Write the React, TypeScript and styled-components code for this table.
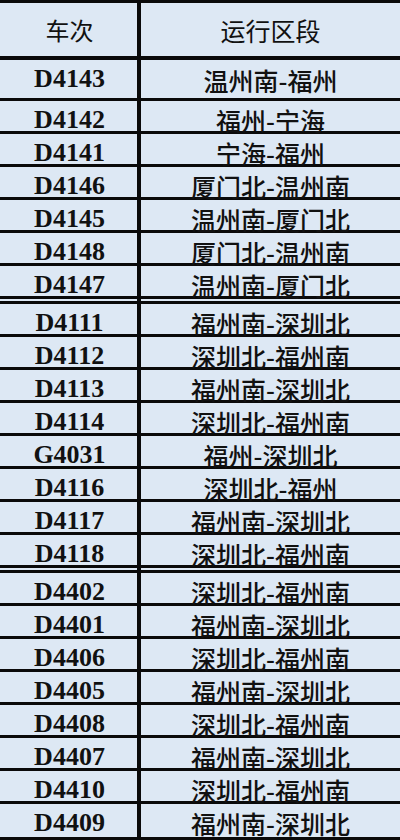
import styled, { createGlobalStyle } from "styled-components";

const GlobalStyle = createGlobalStyle`
  html, body {
    margin: 0;
    padding: 0;
    background: #dde8f4;
  }
`;

const Table = styled.div`
  width: 400px;
  height: 840px;
  box-sizing: border-box;
  border-top: 3px solid #0a0a0a;
  background: #dde8f4;
  overflow: hidden;
`;

const Row = styled.div<{ $tall?: boolean; $double?: boolean; $head?: boolean }>`
  display: grid;
  grid-template-columns: 141px 1fr;
  box-sizing: border-box;
  height: ${(p) => (p.$head ? 57 : p.$tall ? 41 : p.$double ? 38 : 33)}px;
  border-bottom: ${(p) =>
    p.$double ? "8px double #0a0a0a" : p.$head ? "4px solid #0a0a0a" : "3px solid #0a0a0a"};
  &:last-child {
    height: 36px;
  }
`;

const Cell = styled.div`
  display: flex;
  align-items: center;
  justify-content: center;
  color: #111;
  white-space: nowrap;
`;

const CodeCell = styled(Cell)`
  border-right: 4px solid #0a0a0a;
  font-family: "Liberation Serif", "Times New Roman", serif;
  font-weight: bold;
  font-size: 26px;
  padding-left: 2px;
`;

const RouteCell = styled(Cell)`
  font-family: "Noto Sans CJK SC", "Noto Sans", sans-serif;
  font-weight: 500;
  font-size: 25px;
  padding-top: 1px;
`;

const HeadCode = styled(CodeCell)`
  font-family: "Noto Sans CJK SC", sans-serif;
  font-weight: 400;
  font-size: 24px;
`;

const HeadRoute = styled(RouteCell)`
  font-weight: 400;
`;

type Train = { code: string; route: string };

const groups: Train[][] = [
  [
    { code: "D4143", route: "温州南-福州" },
    { code: "D4142", route: "福州-宁海" },
    { code: "D4141", route: "宁海-福州" },
    { code: "D4146", route: "厦门北-温州南" },
    { code: "D4145", route: "温州南-厦门北" },
    { code: "D4148", route: "厦门北-温州南" },
    { code: "D4147", route: "温州南-厦门北" },
  ],
  [
    { code: "D4111", route: "福州南-深圳北" },
    { code: "D4112", route: "深圳北-福州南" },
    { code: "D4113", route: "福州南-深圳北" },
    { code: "D4114", route: "深圳北-福州南" },
    { code: "G4031", route: "福州-深圳北" },
    { code: "D4116", route: "深圳北-福州" },
    { code: "D4117", route: "福州南-深圳北" },
    { code: "D4118", route: "深圳北-福州南" },
  ],
  [
    { code: "D4402", route: "深圳北-福州南" },
    { code: "D4401", route: "福州南-深圳北" },
    { code: "D4406", route: "深圳北-福州南" },
    { code: "D4405", route: "福州南-深圳北" },
    { code: "D4408", route: "深圳北-福州南" },
    { code: "D4407", route: "福州南-深圳北" },
    { code: "D4410", route: "深圳北-福州南" },
    { code: "D4409", route: "福州南-深圳北" },
  ],
];

const App: React.FC = () => {
  return (
    <>
      <GlobalStyle />
      <Table>
        <Row $head>
          <HeadCode>车次</HeadCode>
          <HeadRoute>运行区段</HeadRoute>
        </Row>
        {groups.map((g, gi) =>
          g.map((t, i) => (
            <Row
              key={t.code}
              $tall={gi === 0 && i === 0}
              $double={i === g.length - 1 && gi < groups.length - 1}
            >
              <CodeCell>{t.code}</CodeCell>
              <RouteCell>{t.route}</RouteCell>
            </Row>
          ))
        )}
      </Table>
    </>
  );
};

export default App;
